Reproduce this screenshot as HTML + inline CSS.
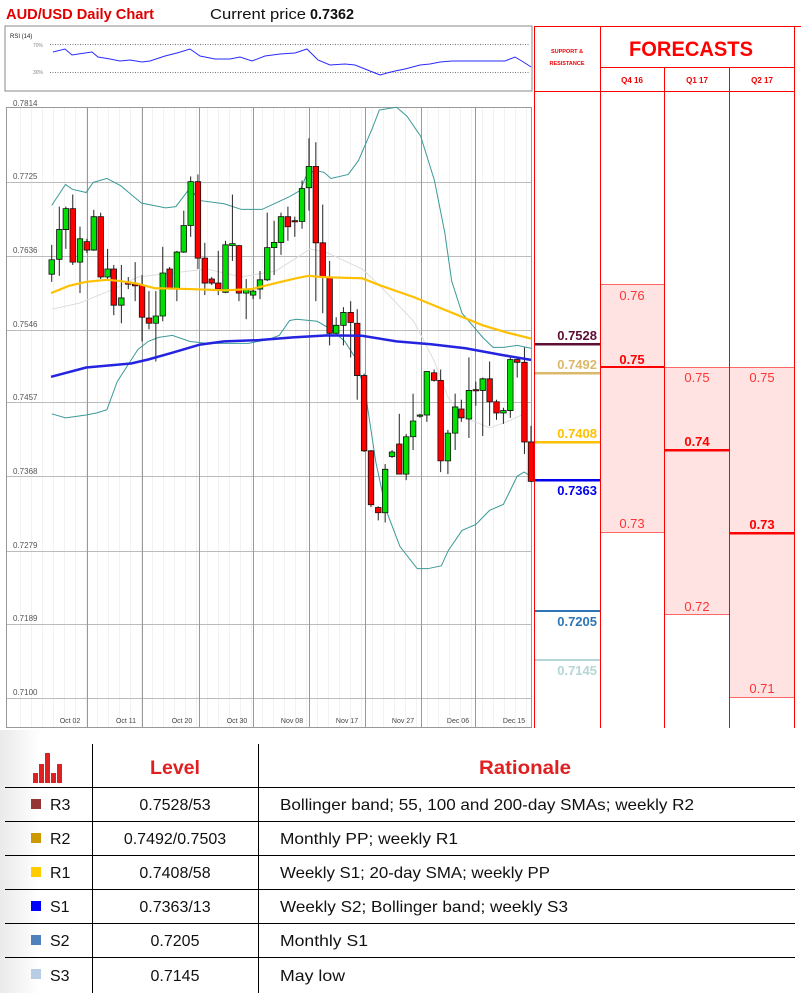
<!DOCTYPE html>
<html><head><meta charset="utf-8"><style>
body{margin:0;width:801px;height:993px;background:#fff;overflow:hidden;font-family:"Liberation Sans",sans-serif;}
svg{display:block}
</style></head><body>
<svg width="801" height="993" viewBox="0 0 801 993" xmlns="http://www.w3.org/2000/svg" font-family="Liberation Sans, sans-serif">
<defs><linearGradient id="bg" x1="0" y1="0" x2="1" y2="0"><stop offset="0" stop-color="#eaeaea"/><stop offset="0.05" stop-color="#fff"/></linearGradient></defs>
<rect x="0" y="730" width="801" height="263" fill="url(#bg)"/>
<text x="6" y="19" font-size="15" font-weight="bold" fill="#e00000" textLength="148" lengthAdjust="spacingAndGlyphs">AUD/USD Daily Chart</text>
<text x="210" y="19" font-size="15" fill="#111" textLength="96" lengthAdjust="spacingAndGlyphs">Current price</text>
<text x="310" y="19" font-size="15" font-weight="bold" fill="#111" textLength="44" lengthAdjust="spacingAndGlyphs">0.7362</text>
<rect x="5" y="26" width="527" height="65" fill="#fff" stroke="#888" stroke-width="1"/>
<text x="10" y="38" font-size="6" fill="#222">RSI (14)</text>
<text x="33" y="47" font-size="5" fill="#888">70%</text>
<text x="33" y="74" font-size="5" fill="#888">30%</text>
<line x1="50" y1="44.5" x2="530" y2="44.5" stroke="#777" stroke-dasharray="1,1.5"/>
<line x1="50" y1="72.5" x2="530" y2="72.5" stroke="#777" stroke-dasharray="1,1.5"/>
<polyline fill="none" stroke="#2a2aff" stroke-width="1" points="53,52 65,49 72,55 85,53 92,52 98,57 110,59 120,61 130,60 142,62 150,61 165,56 177,53 190,49 200,56 215,59 230,59 240,57 252,61 265,56 280,54 295,53 307,49 318,60 330,65 345,64 355,65 370,71 380,75 387,73 395,71 405,69 420,65 430,64 440,62 452,61 465,61 475,61 490,61 505,61 515,57 525,63 531,67"/>
<g id="minor" stroke="#f2f2f2" stroke-width="1"></g>
<g stroke="#bbb" stroke-width="1">
<line x1="6" y1="182.5" x2="531" y2="182.5"/><line x1="6" y1="256.5" x2="531" y2="256.5"/><line x1="6" y1="330.5" x2="531" y2="330.5"/><line x1="6" y1="402.5" x2="531" y2="402.5"/><line x1="6" y1="476.5" x2="531" y2="476.5"/><line x1="6" y1="551.5" x2="531" y2="551.5"/><line x1="6" y1="624.5" x2="531" y2="624.5"/><line x1="6" y1="698.5" x2="531" y2="698.5"/>
<line x1="87.5" y1="107" x2="87.5" y2="728" stroke="#999"/><line x1="142.5" y1="107" x2="142.5" y2="728" stroke="#999"/><line x1="199.5" y1="107" x2="199.5" y2="728" stroke="#999"/><line x1="253.5" y1="107" x2="253.5" y2="728" stroke="#999"/><line x1="309.5" y1="107" x2="309.5" y2="728" stroke="#999"/><line x1="365.5" y1="107" x2="365.5" y2="728" stroke="#999"/><line x1="421.5" y1="107" x2="421.5" y2="728" stroke="#999"/><line x1="475.5" y1="107" x2="475.5" y2="728" stroke="#999"/>
</g>
<g font-size="8" fill="#555">
<text x="13" y="106">0.7814</text><text x="13" y="179">0.7725</text><text x="13" y="253">0.7636</text><text x="13" y="327">0.7546</text><text x="13" y="400">0.7457</text><text x="13" y="474">0.7368</text><text x="13" y="548">0.7279</text><text x="13" y="621">0.7189</text><text x="13" y="695">0.7100</text>
</g>
<rect x="6.5" y="107.5" width="525" height="620" fill="none" stroke="#999"/>
<g font-size="7" fill="#444" text-anchor="middle">
<text x="70" y="723">Oct 02</text><text x="126" y="723">Oct 11</text><text x="182" y="723">Oct 20</text><text x="237" y="723">Oct 30</text><text x="292" y="723">Nov 08</text><text x="347" y="723">Nov 17</text><text x="403" y="723">Nov 27</text><text x="458" y="723">Dec 06</text><text x="514" y="723">Dec 15</text>
</g>
<g transform="translate(0,100) scale(0.3448,0.4023)" fill="none">
<polyline vector-effect="non-scaling-stroke" stroke="#ddd" stroke-width="1" points="150,520 230,505 330,470 400,440 500,430 600,420 700,440 800,425 900,370 950,380 1000,400 1050,420 1100,460 1200,550 1260,650 1300,740 1350,790 1420,815 1470,800 1520,780"/>
<polyline vector-effect="non-scaling-stroke" stroke="#3a9a98" stroke-width="1" points="150,262 190,210 210,222 250,230 270,205 310,195 350,213 410,256 480,268 510,265 550,220 580,250 650,258 700,272 760,272 840,240 870,225 890,185 915,175 940,180 960,195 1010,185 1040,150 1080,70 1100,25 1150,18 1180,40 1220,90 1260,200 1290,330 1310,450 1340,530 1370,560 1400,590 1430,615 1460,615 1500,610 1540,617"/>
<polyline vector-effect="non-scaling-stroke" stroke="#3a9a98" stroke-width="1" points="150,780 190,790 250,783 280,778 310,770 340,700 370,660 400,620 430,600 460,590 500,585 550,600 600,605 720,605 780,595 810,585 840,548 860,545 920,550 960,570 1000,600 1030,640 1060,730 1090,900 1120,1020 1160,1110 1210,1165 1240,1165 1280,1158 1300,1120 1340,1070 1380,1055 1420,1020 1460,1005 1500,935 1520,925 1540,935"/>
<g id="candles"></g>
<polyline vector-effect="non-scaling-stroke" stroke="#ffc000" stroke-width="2.2" points="148,480 200,462 250,452 310,447 350,450 400,457 450,468 550,470 650,473 730,470 800,455 860,443 895,437 930,440 1000,442 1050,443 1100,460 1200,490 1300,525 1400,560 1470,578 1540,593"/>
<polyline vector-effect="non-scaling-stroke" stroke="#2424e0" stroke-width="2.5" points="148,688 250,665 380,655 430,645 500,628 580,608 650,600 750,597 850,590 950,585 1050,586 1150,600 1250,607 1350,617 1450,633 1540,646"/>
</g>
<g stroke="#f00" stroke-width="1">
<line x1="534.5" y1="26" x2="534.5" y2="728"/>
<line x1="534" y1="26.5" x2="801" y2="26.5"/>
<line x1="600" y1="67.5" x2="795" y2="67.5"/>
<line x1="534" y1="91.5" x2="795" y2="91.5"/>
</g>
<text x="567" y="53" font-size="5.5" font-weight="bold" fill="#e00" text-anchor="middle">SUPPORT &amp;</text>
<text x="567" y="65" font-size="5.5" font-weight="bold" fill="#e00" text-anchor="middle">RESISTANCE</text>
<text x="691" y="56" font-size="21" font-weight="bold" fill="#f00" text-anchor="middle" textLength="124" lengthAdjust="spacingAndGlyphs">FORECASTS</text>
<g font-size="8" font-weight="bold" fill="#e00" text-anchor="middle"><text x="632" y="83">Q4 16</text><text x="697" y="83">Q1 17</text><text x="762" y="83">Q2 17</text></g>
<rect x="600.5" y="284.5" width="64" height="248" fill="#ffe3e3" stroke="#f66" stroke-width="1"/>
<rect x="664.5" y="367.5" width="65" height="247" fill="#ffe3e3" stroke="#f66" stroke-width="1"/>
<rect x="729.5" y="367.5" width="65" height="330" fill="#ffe3e3" stroke="#f66" stroke-width="1"/>
<g stroke="#f00" stroke-width="1"><line x1="600.5" y1="26" x2="600.5" y2="728"/><line x1="664.5" y1="67" x2="664.5" y2="728"/><line x1="729.5" y1="67" x2="729.5" y2="728"/><line x1="794.5" y1="26" x2="794.5" y2="728"/></g>
<rect x="601" y="366" width="63" height="2" fill="#f00"/>
<rect x="665" y="449" width="64" height="2.5" fill="#f00"/>
<rect x="730" y="532" width="64" height="2.5" fill="#f00"/>
<g font-size="13" fill="#f33" text-anchor="middle">
<text x="632" y="300">0.76</text><text x="632" y="528">0.73</text>
<text x="697" y="382">0.75</text><text x="697" y="611">0.72</text>
<text x="762" y="382">0.75</text><text x="762" y="693">0.71</text>
</g>
<g font-size="13" font-weight="bold" fill="#f00" text-anchor="middle">
<text x="632" y="364">0.75</text><text x="697" y="446">0.74</text><text x="762" y="529">0.73</text>
</g>
<rect x="535" y="343" width="65" height="2.5" fill="#5c0f35"/>
<text x="597" y="340" font-size="13" font-weight="bold" fill="#5c0f35" text-anchor="end">0.7528</text>
<rect x="535" y="372" width="65" height="2.5" fill="#dbb86a"/>
<text x="597" y="369" font-size="13" font-weight="bold" fill="#dbb86a" text-anchor="end">0.7492</text>
<rect x="535" y="441" width="65" height="2.5" fill="#ffc000"/>
<text x="597" y="438" font-size="13" font-weight="bold" fill="#ffc000" text-anchor="end">0.7408</text>
<rect x="535" y="479" width="65" height="2.5" fill="#0000ee"/>
<text x="597" y="495" font-size="13" font-weight="bold" fill="#0000ee" text-anchor="end">0.7363</text>
<rect x="535" y="610" width="65" height="2" fill="#2e75b6"/>
<text x="597" y="626" font-size="13" font-weight="bold" fill="#2e75b6" text-anchor="end">0.7205</text>
<rect x="535" y="659" width="65" height="2" fill="#b4d6d6"/>
<text x="597" y="675" font-size="13" font-weight="bold" fill="#b4d6d6" text-anchor="end">0.7145</text>
<g fill="#e02020"><rect x="33" y="773" width="5" height="10"/><rect x="39" y="764" width="5" height="19"/><rect x="45" y="753" width="5" height="30"/><rect x="51" y="773" width="5" height="10"/><rect x="57" y="764" width="5" height="19"/></g>
<text x="175" y="774" font-size="19" font-weight="bold" fill="#e02020" text-anchor="middle" textLength="50" lengthAdjust="spacingAndGlyphs">Level</text>
<text x="525" y="774" font-size="19" font-weight="bold" fill="#e02020" text-anchor="middle" textLength="92" lengthAdjust="spacingAndGlyphs">Rationale</text>
<g stroke="#000" stroke-width="1">
<line x1="92.5" y1="744" x2="92.5" y2="993"/><line x1="258.5" y1="744" x2="258.5" y2="993"/>
<line x1="5" y1="787.5" x2="795" y2="787.5"/><line x1="5" y1="821.5" x2="795" y2="821.5"/><line x1="5" y1="855.5" x2="795" y2="855.5"/><line x1="5" y1="889.5" x2="795" y2="889.5"/><line x1="5" y1="923.5" x2="795" y2="923.5"/><line x1="5" y1="957.5" x2="795" y2="957.5"/>
</g>
<g font-size="16" fill="#111">
<rect x="31" y="799" width="10" height="10" fill="#943634"/><text x="50" y="810">R3</text><text x="175" y="810" text-anchor="middle">0.7528/53</text><text x="280" y="810" textLength="414" lengthAdjust="spacingAndGlyphs">Bollinger band; 55, 100 and 200-day SMAs; weekly R2</text>
<rect x="31" y="833" width="10" height="10" fill="#cc9900"/><text x="50" y="844">R2</text><text x="175" y="844" text-anchor="middle">0.7492/0.7503</text><text x="280" y="844" textLength="178" lengthAdjust="spacingAndGlyphs">Monthly PP; weekly R1</text>
<rect x="31" y="867" width="10" height="10" fill="#ffcc00"/><text x="50" y="878">R1</text><text x="175" y="878" text-anchor="middle">0.7408/58</text><text x="280" y="878" textLength="270" lengthAdjust="spacingAndGlyphs">Weekly S1; 20-day SMA; weekly PP</text>
<rect x="31" y="901" width="10" height="10" fill="#0000ff"/><text x="50" y="912">S1</text><text x="175" y="912" text-anchor="middle">0.7363/13</text><text x="280" y="912" textLength="288" lengthAdjust="spacingAndGlyphs">Weekly S2; Bollinger band; weekly S3</text>
<rect x="31" y="935" width="10" height="10" fill="#4f81bd"/><text x="50" y="946">S2</text><text x="175" y="946" text-anchor="middle">0.7205</text><text x="280" y="946" textLength="88" lengthAdjust="spacingAndGlyphs">Monthly S1</text>
<rect x="31" y="969" width="10" height="10" fill="#b8cce4"/><text x="50" y="981">S3</text><text x="175" y="981" text-anchor="middle">0.7145</text><text x="280" y="981" textLength="65" lengthAdjust="spacingAndGlyphs">May low</text>
</g>
</svg>
<script>
var C=[[150,'g',397,433,360,452],[172,'g',322,396,265,437],[191,'g',270,322,265,370],[211,'r',270,403,235,410],[232,'g',345,403,315,480],[252,'r',352,373,345,380],[272,'g',290,373,273,375],[292,'r',290,440,280,445],[312,'g',420,440,370,445],[330,'r',420,510,410,535],[352,'g',492,510,410,555],[372,'r',452,458,440,470],[392,'r',458,462,403,500],[412,'r',460,540,435,600],[432,'r',542,555,475,570],[452,'g',537,555,475,650],[472,'g',430,537,365,550],[492,'r',420,468,415,470],[513,'g',378,468,375,500],[533,'g',312,378,275,380],[553,'g',203,312,190,340],[574,'r',203,393,185,420],[594,'r',393,455,355,485],[614,'r',445,455,440,460],[633,'r',455,470,375,485],[654,'g',360,478,350,480],[674,'g',357,362,235,400],[693,'r',362,480,360,500],[714,'g',470,480,445,545],[734,'g',475,485,470,495],[754,'g',447,470,425,495],[775,'g',367,447,280,450],[795,'g',354,367,300,435],[815,'g',290,354,280,385],[835,'r',290,315,265,350],[855,'r',300,302,290,340],[876,'g',220,302,200,320],[896,'g',165,218,95,275],[916,'r',165,355,105,500],[936,'r',355,440,260,530],[956,'r',440,580,400,610],[975,'g',560,580,540,580],[996,'g',528,560,515,610],[1017,'r',528,553,500,640],[1036,'r',555,685,520,745],[1056,'r',685,872,680,875],[1076,'r',872,1006,870,1012],[1097,'r',1013,1026,1010,1045],[1117,'g',918,1026,905,1050],[1137,'g',875,886,870,890],[1158,'r',855,930,780,930],[1178,'g',837,930,830,945],[1198,'g',798,837,730,870],[1218,'g',783,785,780,790],[1238,'g',675,783,675,800],[1259,'r',678,697,670,700],[1278,'r',697,897,670,925],[1299,'g',828,897,820,930],[1320,'g',763,828,730,870],[1338,'r',768,790,745,800],[1360,'g',722,793,640,840],[1380,'r',720,722,700,760],[1400,'g',693,722,690,835],[1420,'r',693,750,650,810],[1440,'r',750,778,745,795],[1460,'g',772,778,765,805],[1480,'g',645,772,640,790],[1500,'r',645,652,640,690],[1521,'r',652,850,615,880],[1540,'r',850,948,810,950]];
var s='';C.forEach(function(c){var f=c[1]=='g'?'#00e000':'#ff0000';s+='<line vector-effect="non-scaling-stroke" x1="'+c[0]+'" x2="'+c[0]+'" y1="'+c[4]+'" y2="'+c[5]+'" stroke="#222" stroke-width="1"/>';var h=Math.max(c[3]-c[2],3);s+='<rect vector-effect="non-scaling-stroke" x="'+(c[0]-8)+'" y="'+c[2]+'" width="16" height="'+h+'" fill="'+f+'" stroke="#111" stroke-width="0.8"/>';});
document.getElementById('candles').innerHTML=s;
var m='';for(var x=20;x<531;x+=11){m+='<line x1="'+x+'.5" y1="108" x2="'+x+'.5" y2="727"/>';}document.getElementById('minor').innerHTML=m;
</script>
</body></html>
